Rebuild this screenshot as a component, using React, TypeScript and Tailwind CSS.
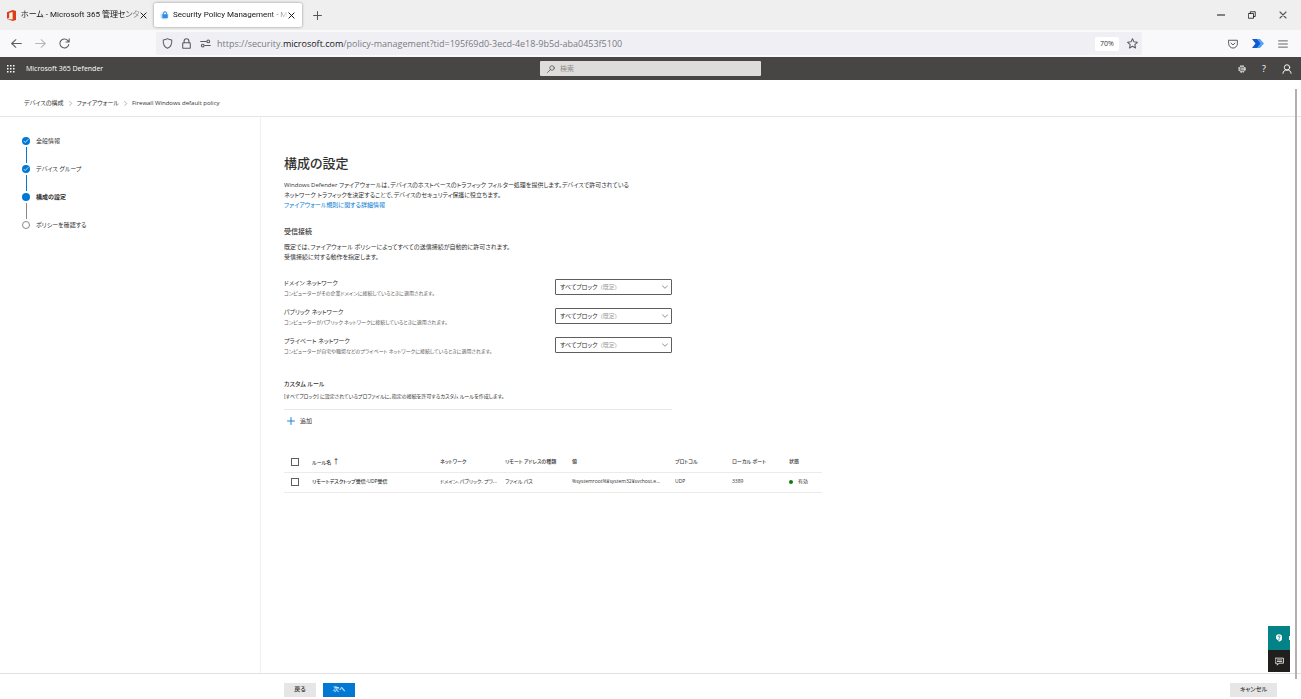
import type { ReactNode } from 'react';

type IconProps = { className?: string; children: ReactNode };

function Icon({ className = '', children }: IconProps) {
  return (
    <svg
      viewBox="0 0 16 16"
      className={`shrink-0 ${className}`}
      fill="none"
      stroke="currentColor"
      strokeLinecap="round"
      strokeLinejoin="round"
      aria-hidden="true"
    >
      {children}
    </svg>
  );
}

function CloseIcon({ className = 'size-[7px]' }: { className?: string }) {
  return (
    <Icon className={className}>
      <path d="M2 2l12 12M14 2L2 14" strokeWidth="2.2" />
    </Icon>
  );
}

function TabBar() {
  return (
    <div className="flex h-[30px] shrink-0 items-center bg-[#efefef] font-[Roboto,'Noto_Sans_CJK_JP',sans-serif] text-[#15141a]">
      <div className="flex h-6 w-[151px] items-center pl-[7px]">
        <svg viewBox="0 0 20 24" className="mr-[5px] h-[11px] w-[9px] shrink-0" aria-hidden="true">
          <path fillRule="evenodd" d="M0 4.5L12.5 0 20 2.2v19.6L12.5 24 0 19.6l12.5 1.5V4.3L4.8 6.2v11.3L0 19.4z" fill="#dc3e15" />
        </svg>
        <span className="bg-linear-to-r from-[#15141a] from-85% to-[#15141a50] bg-clip-text text-[8px] whitespace-nowrap text-transparent">
          ホーム - Microsoft 365 管理センタ
        </span>
        <button type="button" aria-label="タブを閉じる" className="mr-2 ml-auto">
          <CloseIcon />
        </button>
      </div>
      <div className="ml-[3px] flex h-6 w-[148px] items-center rounded-[2px] bg-white pl-[6px] shadow-[0_0_3px_rgba(0,0,0,0.4)]">
        <span className="mr-[4px] flex size-[9px] shrink-0 items-center justify-center rounded-full bg-[#e3eff9] text-[#2f8be0]">
          <Icon className="size-[8px]">
            <rect x="3" y="7" width="10" height="7" fill="currentColor" />
            <path d="M5 7V4.5a3 3 0 016 0V7" strokeWidth="2" />
          </Icon>
        </span>
        <span className="bg-linear-to-r from-[#15141a] from-85% to-[#15141a20] bg-clip-text text-[8px] whitespace-nowrap text-transparent">
          Security Policy Management - M
        </span>
        <button type="button" aria-label="タブを閉じる" className="mr-[7px] ml-auto">
          <CloseIcon />
        </button>
      </div>
      <button type="button" aria-label="新しいタブ" className="ml-[11px] text-[#55545a]">
        <Icon className="size-[9px]">
          <path d="M8 1v14M1 8h14" strokeWidth="1.8" />
        </Icon>
      </button>
      <div className="ml-auto flex items-center gap-[23px] pr-[14px]">
        <button type="button" aria-label="最小化">
          <Icon className="size-[8px]">
            <path d="M1 8h14" strokeWidth="2.4" />
          </Icon>
        </button>
        <button type="button" aria-label="元に戻す">
          <Icon className="size-[8px]">
            <path d="M1.5 5h9.5v9.5H1.5zM4.5 5V1.5h10V11H11" strokeWidth="1.6" />
          </Icon>
        </button>
        <button type="button" aria-label="閉じる" className="text-[#55545a]">
          <CloseIcon className="size-[8px]" />
        </button>
      </div>
    </div>
  );
}

function AddressBar() {
  return (
    <div className="flex h-[27px] shrink-0 items-center bg-[#f9f9fb] text-[#5b5b66]">
      <div className="flex w-[156px] items-center gap-[13px] pl-[11px]">
        <button type="button" aria-label="戻る">
          <Icon className="size-[11px]">
            <path d="M15 8H1M7 2.5L1 8l6 5.5" strokeWidth="1.6" />
          </Icon>
        </button>
        <button type="button" aria-label="進む" className="text-[#b5b5bc]">
          <Icon className="size-[11px]">
            <path d="M1 8h14M9 2.5L15 8l-6 5.5" strokeWidth="1.5" />
          </Icon>
        </button>
        <button type="button" aria-label="再読み込み">
          <Icon className="size-[11px]">
            <path d="M14.2 9.5A6.5 6.5 0 1112.6 3.5L14.5 5.6M14.8 1v4.8H10" strokeWidth="1.5" />
          </Icon>
        </button>
      </div>
      <div className="flex h-[23px] flex-1 items-center rounded-[2px] bg-[#f0f0f4] pl-[6px]">
        <Icon className="size-[11px]">
          <path d="M8 1C6 2.3 4 2.7 1.8 2.8 1.4 8.5 3 12.8 8 15c5-2.2 6.6-6.5 6.2-12.2C12 2.7 10 2.3 8 1z" strokeWidth="1.5" />
        </Icon>
        <Icon className="ml-2 size-[11px]">
          <rect x="2.5" y="7" width="11" height="8" rx="1" strokeWidth="1.6" />
          <path d="M4.5 7V4.5a3.5 3.5 0 017 0V7" strokeWidth="1.6" />
        </Icon>
        <Icon className="ml-2 size-[11px]">
          <path d="M1 5h8M7 11h8" strokeWidth="1.6" />
          <circle cx="12" cy="5" r="2" strokeWidth="1.6" />
          <circle cx="4" cy="11" r="2" strokeWidth="1.6" />
        </Icon>
        <a href="#top" className="ml-[6px] text-[9px] whitespace-nowrap text-[#7a7a83]">
          https://security.<span className="text-[#15141a]">microsoft.com</span>
          /policy-management?tid=195f69d0-3ecd-4e18-9b5d-aba0453f5100
        </a>
        <button type="button" className="ml-auto flex h-[14px] w-6 items-center justify-center rounded-[2px] bg-white pt-px text-[7px] text-[#33333b]">
          70%
        </button>
        <button type="button" aria-label="ブックマーク" className="mr-[4px] ml-[8px]">
          <Icon className="size-[11px]">
            <path d="M8 1l2.1 4.6 5 .6-3.7 3.4 1 5L8 12.1l-4.4 2.5 1-5L.9 6.2l5-.6z" strokeWidth="1.5" />
          </Icon>
        </button>
      </div>
      <div className="flex items-center gap-[14px] pr-[13px] pl-[86px]">
        <button type="button" aria-label="Pocket">
          <Icon className="size-[10px]">
            <path d="M1 2h14v5.5a7 7 0 01-14 0zM4.8 6.5L8 9.5l3.2-3" strokeWidth="1.6" />
          </Icon>
        </button>
        <button type="button" aria-label="拡張機能">
          <svg viewBox="0 0 24 18" className="h-[9px] w-3" aria-hidden="true">
            <path d="M0 0h11l7 9-7 9H0l7-9z" fill="#1259d4" />
            <path d="M10 0h6l8 9-8 9h-6l7-9z" fill="#54a3f5" />
          </svg>
        </button>
        <button type="button" aria-label="メニュー">
          <Icon className="size-[10px]">
            <path d="M1 3h14M1 8h14M1 13h14" strokeWidth="1.5" />
          </Icon>
        </button>
      </div>
    </div>
  );
}

function SuiteHeader() {
  return (
    <header className="grid h-[23px] shrink-0 grid-cols-[1fr_221px_1fr] items-center bg-[#484644] text-white">
      <div className="flex items-center gap-[11px] pl-[7px]">
        <button type="button" aria-label="アプリ起動ツール">
          <svg viewBox="0 0 8 8" className="size-2" fill="currentColor" aria-hidden="true">
            {[0, 3, 6].map((y) =>
              [0, 3, 6].map((x) => <rect key={`${x}${y}`} x={x} y={y} width="1.5" height="1.5" />),
            )}
          </svg>
        </button>
        <span className="pt-px text-[7px] font-medium">Microsoft 365 Defender</span>
      </div>
      <label className="flex h-[15px] items-center gap-[5px] rounded-[1px] bg-[#dedddb] pl-[7px] text-[#55534f]">
        <Icon className="size-[8px]">
          <circle cx="10" cy="6" r="4.5" strokeWidth="1.5" />
          <path d="M6.7 9.3L1 15" strokeWidth="1.5" />
        </Icon>
        <input aria-label="検索" placeholder="検索" className="min-w-0 flex-1 bg-transparent pt-px text-[7px] outline-none placeholder:text-[#908e8b]" />
      </label>
      <div className="flex items-center justify-end gap-[14px] pr-[9px]">
        <button type="button" aria-label="設定">
          <Icon className="size-[8px]">
            <circle cx="8" cy="8" r="6.6" strokeWidth="2" strokeDasharray="3.2 2" strokeLinecap="butt" />
            <circle cx="8" cy="8" r="5.4" strokeWidth="1.2" />
            <circle cx="8" cy="8" r="2.4" strokeWidth="1.4" />
          </Icon>
        </button>
        <button type="button" className="w-2 text-[9px]">
          ?
        </button>
        <button type="button" aria-label="アカウント">
          <Icon className="size-[10px]">
            <circle cx="8" cy="5.5" r="4.3" strokeWidth="1.5" />
            <path d="M1.5 15c.4-3.5 2.5-5.5 6.5-5.5s6.1 2 6.5 5.5" strokeWidth="1.5" />
          </Icon>
        </button>
      </div>
    </header>
  );
}

function Breadcrumb() {
  const chevron = (
    <Icon className="size-[5px] text-[#8a8886]">
      <path d="M5 1l7 7-7 7" strokeWidth="2" />
    </Icon>
  );
  return (
    <nav aria-label="階層リンク" className="flex h-[37px] shrink-0 items-center gap-1 border-b border-[#e6e6e6] pt-[10px] pl-6 text-[6px] text-[#323130]">
      <a href="#config">デバイスの構成</a>
      {chevron}
      <a href="#firewall">ファイアウォール</a>
      {chevron}
      <span>Firewall Windows default policy</span>
    </nav>
  );
}

const steps = [
  { name: '全般情報', state: 'done' },
  { name: 'デバイス グループ', state: 'done' },
  { name: '構成の設定', state: 'current' },
  { name: 'ポリシーを確認する', state: 'todo' },
];

function Steps() {
  return (
    <aside className="w-[261px] shrink-0 border-r border-[#f0f0f0] pt-5 pl-[22px]">
      <ol className="text-[6px] text-[#323130]">
        {steps.map((step, i) => (
          <li key={step.name} className="flex gap-[6px]">
            <div className="flex w-2 flex-col items-center">
              {step.state === 'todo' ? (
                <span className="size-2 rounded-full border border-[#8a8886] bg-white" />
              ) : (
                <span className="flex size-2 items-center justify-center rounded-full bg-[#0078d4] text-white">
                  {step.state === 'done' && (
                    <Icon className="size-[6px]">
                      <path d="M2.5 8.5l3.5 3.5 7.5-8" strokeWidth="2" />
                    </Icon>
                  )}
                </span>
              )}
              {i < 3 && <span className={`my-[2px] h-4 w-px ${i < 2 ? 'bg-[#0078d4]' : 'bg-[#8a8886]'}`} />}
            </div>
            <span className={`leading-[9px] ${step.state === 'current' ? 'font-semibold' : ''}`}>{step.name}</span>
          </li>
        ))}
      </ol>
    </aside>
  );
}

const networks = [
  { id: 'domain', name: 'ドメイン ネットワーク', note: 'コンピューターがその企業ドメインに接続しているときに適用されます。' },
  { id: 'public', name: 'パブリック ネットワーク', note: 'コンピューターがパブリック ネットワークに接続しているときに適用されます。' },
  { id: 'private', name: 'プライベート ネットワーク', note: 'コンピューターが自宅や職場などのプライベート ネットワークに接続しているときに適用されます。' },
];

function NetworkRow({ id, name, note }: { id: string; name: string; note: string }) {
  return (
    <div className="flex h-[29px] items-start">
      <div className="w-[271px] shrink-0 whitespace-nowrap">
        <label htmlFor={id} className="block text-[6px] leading-[10px]">
          {name}
        </label>
        <p className="text-[5px] leading-[10px] text-[#605e5c]">{note}</p>
      </div>
      <div className="relative mt-px h-4 flex-1">
        <select id={id} className="block h-4 w-full appearance-none rounded-[1px] border border-[#605e5c] bg-white pl-1 text-[6px] leading-[14px]">
          <option>すべてブロック</option>
          <option>許可</option>
        </select>
        <span className="pointer-events-none absolute inset-y-0 left-[46px] flex items-center text-[6px] leading-4 text-[#a19f9d]">(既定)</span>
        <Icon className="pointer-events-none absolute top-[5px] right-1 size-[6px] text-[#605e5c]">
          <path d="M1 4.5l7 7 7-7" strokeWidth="1.8" />
        </Icon>
      </div>
    </div>
  );
}

function CheckBox({ label }: { label: string }) {
  return <input type="checkbox" aria-label={label} className="block size-2 appearance-none border border-[#605e5c] bg-white" />;
}

function RulesTable() {
  return (
    <table className="mt-[26px] w-[538px] table-fixed text-left text-[5px] whitespace-nowrap text-[#323130]">
      <colgroup>
        <col className="w-[28px]" />
        <col className="w-[128px]" />
        <col className="w-[65px]" />
        <col className="w-[67px]" />
        <col className="w-[103px]" />
        <col className="w-[57px]" />
        <col className="w-[57px]" />
        <col />
      </colgroup>
      <thead>
        <tr className="h-5 border-b border-[#edebe9]">
          <th className="pl-[7px]"><CheckBox label="すべて選択" /></th>
          <th className="font-medium">
            ルール名 <span className="text-[7px]">↑</span>
          </th>
          <th className="font-medium">ネットワーク</th>
          <th className="font-medium">リモート アドレスの種類</th>
          <th className="font-medium">値</th>
          <th className="font-medium">プロトコル</th>
          <th className="font-medium">ローカル ポート</th>
          <th className="font-medium">状態</th>
        </tr>
      </thead>
      <tbody>
        <tr className="h-5 border-b border-[#edebe9]">
          <td className="pl-[7px]"><CheckBox label="規則を選択" /></td>
          <td className="font-medium text-[#201f1e]">リモートデスクトップ受信-UDP受信</td>
          <td>ドメイン, パブリック, プラ...</td>
          <td>ファイル パス</td>
          <td>%systemroot%¥system32¥svchost.e...</td>
          <td>UDP</td>
          <td>3389</td>
          <td>
            <span className="flex items-center gap-[5px]">
              <span className="size-1 rounded-full bg-[#107c10]" />
              有効
            </span>
          </td>
        </tr>
      </tbody>
    </table>
  );
}

function Settings() {
  return (
    <main className="min-w-0 flex-1 pt-[38px] pl-[23px] text-[#323130]">
      <h1 className="text-[13px] leading-4 font-medium">構成の設定</h1>
      <p className="mt-[9px] text-[6px] leading-[10px]">
        Windows Defender ファイアウォールは、デバイスのホストベースのトラフィック フィルター処理を提供します。デバイスで許可されている
        <br />
        ネットワーク トラフィックを決定することで、デバイスのセキュリティ保護に役立ちます。
        <br />
        <a href="#learn" className="text-[#0078d4]">ファイアウォール規則に関する詳細情報</a>
      </p>
      <h2 className="mt-[17px] text-[7px] leading-[10px] font-medium">受信接続</h2>
      <p className="mt-[5px] text-[6px] leading-[10px]">
        既定では、ファイアウォール ポリシーによってすべての送信接続が自動的に許可されます。
        <br />
        受信接続に対する動作を指定します。
      </p>
      <div className="mt-4 w-[388px]">
        {networks.map((n) => (
          <NetworkRow key={n.id} {...n} />
        ))}
      </div>
      <h2 className="mt-[14px] text-[6px] leading-[10px] font-medium">カスタム ルール</h2>
      <p className="mt-[2px] text-[5px] leading-[10px]">
        [すべてブロック] に設定されているプロファイルに、指定の接続を許可するカスタム ルールを作成します。
      </p>
      <div className="mt-2 w-[388px] border-t border-[#e8e8e8] pt-[6px] pl-[3px]">
        <button type="button" className="flex h-[10px] items-center gap-[5px] text-[6px]">
          <Icon className="size-[8px] text-[#0078d4]">
            <path d="M8 1v14M1 8h14" strokeWidth="1.8" />
          </Icon>
          追加
        </button>
      </div>
      <RulesTable />
    </main>
  );
}

function HelpDock() {
  return (
    <div className="absolute right-[11px] bottom-px w-[22px] text-white">
      <button type="button" aria-label="ヘルプ" className="relative flex h-6 w-full items-center justify-center bg-[#038387]">
        <Icon className="size-[8px]">
          <path d="M2 6a6 5.5 0 0112 0v3c0 3-2 5-5 6H7v-2.5C4 12 2 10 2 7z" fill="currentColor" stroke="none" />
          <path d="M6 5.5c0-2.2 4-2.2 4 0S8 7.2 8 8.5M8 11v.2" stroke="#038387" strokeWidth="1.8" />
        </Icon>
        <span className="absolute right-0 h-1 w-px bg-white" />
      </button>
      <button type="button" aria-label="フィードバック" className="flex h-[22px] w-full items-center justify-center bg-[#201f1e]">
        <Icon className="size-[9px]">
          <path d="M1 2h14v9H7l-3 3.5V11H1zM4 5.2h8M4 8h8" strokeWidth="1.4" />
        </Icon>
      </button>
    </div>
  );
}

export default function App() {
  return (
    <div
      id="top"
      lang="ja"
      className="relative flex min-h-screen flex-col bg-white font-['Open_Sans','Noto_Sans_CJK_JP',sans-serif] [font-feature-settings:'palt']"
    >
      <TabBar />
      <AddressBar />
      <SuiteHeader />
      <Breadcrumb />
      <div className="relative flex flex-1">
        <Steps />
        <Settings />
        <HelpDock />
      </div>
      <footer className="flex h-[26px] shrink-0 items-center gap-[7px] border-t border-[#e1e1e1] pt-[6px] pr-6 pl-[284px] text-[6px] font-medium text-[#323130]">
        <button type="button" className="h-[14px] w-8 bg-[#e6e6e6]">戻る</button>
        <button type="button" className="h-[14px] w-8 bg-[#0078d4] text-white">次へ</button>
        <button type="button" className="ml-auto h-[14px] w-[47px] bg-[#e6e6e6]">キャンセル</button>
      </footer>
      <div className="absolute top-[89px] right-[4px] bottom-5 w-[2px] bg-[#b0b0b0]" />
    </div>
  );
}
